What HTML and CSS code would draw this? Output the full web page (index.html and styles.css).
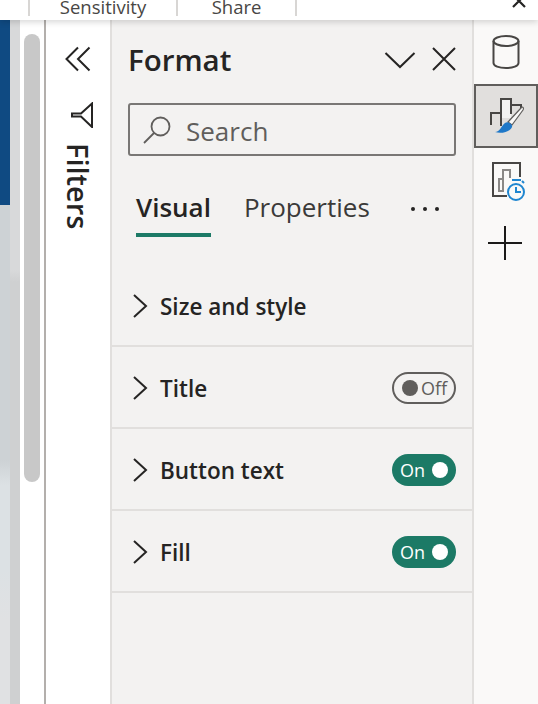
FILE: index.html
```html
<!DOCTYPE html>
<html lang="en">
<head>
    <meta charset="UTF-8">
    <title>Format</title>
    <link rel="stylesheet" href="styles.css">
</head>
<body>
    <div class="ribbon">
        <div class="ribbon-item sensitivity">Sensitivity</div>
        <div class="ribbon-item share">Share</div>
        <svg class="ribbon-close" width="18" height="8" viewBox="0 0 18 8"><path d="M3-5 15 7M15-5 3 7" stroke="#252423" stroke-width="2.2" fill="none"/></svg>
    </div>
    <div class="main">
        <div class="canvas-edge"></div>
        <div class="scroll-area"><div class="scroll-thumb"></div></div>
        <div class="filters">
            <svg class="filters-arrows" width="26" height="26" viewBox="0 0 26 26"><path d="M13 1.500 1.500 13 13 24.500M24.500 1.500 13 13 24.500 24.500" stroke="#252423" stroke-width="2" fill="none"/></svg>
            <svg class="filters-funnel" width="24" height="26" viewBox="0 0 24 26"><path d="M22 1.500V25L11 14.500H2V11.500H11Z" stroke="#252423" stroke-width="2" fill="none"/></svg>
            <div class="filters-label">Filters</div>
        </div>
        <div class="format">
            <div class="format-head">
                <h1 class="format-title">Format</h1>
                <svg class="format-chevron" width="32" height="20" viewBox="0 0 32 20"><path d="M1.500 3 16 17 30.500 3" stroke="#252423" stroke-width="2" fill="none"/></svg>
                <svg class="format-close" width="26" height="26" viewBox="0 0 26 26"><path d="M2 2 24 24M24 2 2 24" stroke="#252423" stroke-width="2" fill="none"/></svg>
            </div>
            <div class="search">
                <svg width="30" height="30" viewBox="0 0 30 30"><circle cx="18.500" cy="11.500" r="9" stroke="#605e5c" stroke-width="1.800" fill="none"/><path d="M12 18 2 28" stroke="#605e5c" stroke-width="1.800" fill="none"/></svg>
                <span>Search</span>
            </div>
            <div class="tabs">
                <div class="tab active">Visual</div>
                <div class="tab">Properties</div>
                <div class="tab-more"><i></i><i></i><i></i></div>
            </div>
            <div class="row first">
                <svg class="row-arrow" width="16" height="26" viewBox="0 0 16 26"><path d="M2 2 14 13 2 24" stroke="#252423" stroke-width="2" fill="none"/></svg>
                <span class="row-label">Size and style</span>
            </div>
            <div class="row">
                <svg class="row-arrow" width="16" height="26" viewBox="0 0 16 26"><path d="M2 2 14 13 2 24" stroke="#252423" stroke-width="2" fill="none"/></svg>
                <span class="row-label">Title</span>
                <div class="toggle off"><b></b><span>Off</span></div>
            </div>
            <div class="row">
                <svg class="row-arrow" width="16" height="26" viewBox="0 0 16 26"><path d="M2 2 14 13 2 24" stroke="#252423" stroke-width="2" fill="none"/></svg>
                <span class="row-label">Button text</span>
                <div class="toggle on"><span>On</span><b></b></div>
            </div>
            <div class="row">
                <svg class="row-arrow" width="16" height="26" viewBox="0 0 16 26"><path d="M2 2 14 13 2 24" stroke="#252423" stroke-width="2" fill="none"/></svg>
                <span class="row-label">Fill</span>
                <div class="toggle on"><span>On</span><b></b></div>
            </div>
        </div>
        <div class="rail">
            <div class="rail-btn data">
                <svg width="28" height="36" viewBox="0 0 28 36"><ellipse cx="14" cy="7" rx="12.500" ry="5" stroke="#484644" stroke-width="2" fill="none"/><path d="M1.500 7V29C1.500 32 7 34 14 34S26.500 32 26.500 29V7" stroke="#484644" stroke-width="2" fill="none"/></svg>
            </div>
            <div class="rail-btn selected">
                <svg width="36" height="36" viewBox="0 0 36 36">
                    <path d="M13 1H23V20H13Z" fill="#f3f2f1"/>
                    <path d="M3 27V15H13M13 28V1H23V16M23 7H33V11" stroke="#484644" stroke-width="2" fill="none"/>
                    <path d="M20 24 33 10C35 8 36 10 35 12L24 27Z" stroke="#605e5c" stroke-width="1.200" fill="#faf9f8"/>
                    <path d="M7 34C12 34 13 28 17 25C20 23 25 26 24 29C22 34 13 36 7 34Z" fill="#1f78c8"/>
                </svg>
            </div>
            <div class="rail-btn time">
                <svg width="36" height="38" viewBox="0 0 36 38">
                    <path d="M19 35H5V2H32V16" stroke="#484644" stroke-width="2" fill="none"/>
                    <path d="M11 18H15V30H11ZM15 18V9H22V17" stroke="#8a8886" stroke-width="2" fill="none"/>
                    <circle cx="28" cy="31" r="8" stroke="#1f86d0" stroke-width="2" fill="#faf9f8"/>
                    <path d="M28 26V31H33M24 19H33M34 20 36 22" stroke="#1f86d0" stroke-width="2" fill="none"/>
                </svg>
            </div>
            <div class="rail-btn add">
                <svg class="add-icon" width="34" height="34" viewBox="0 0 34 34"><path d="M17 0V34M0 17H34" stroke="#1b1a19" stroke-width="2" fill="none"/></svg>
            </div>
        </div>
    </div>
</body>
</html>
```

FILE: styles.css
```css
html, body {
    margin: 0;
    height: 100%;
}
body {
    display: flex;
    flex-direction: column;
    width: 538px;
    height: 704px;
    overflow: hidden;
    font-family: "Open Sans", "Noto Sans", sans-serif;
    color: #252423;
    background: #fff;
}
.ribbon {
    display: flex;
    align-items: flex-end;
    height: 20px;
    flex: none;
    background: #fff;
    box-shadow: 0 2px 6px rgba(0, 0, 0, .16);
    padding-left: 28px;
    overflow: hidden;
    position: relative;
    z-index: 1;
}
.ribbon-item {
    height: 16px;
    line-height: 14px;
    margin-bottom: 4px;
    border-left: 2px solid #d8d6d4;
    font-size: 18.500px;
    text-align: center;
    color: #484644;
}
.sensitivity {
    width: 146px;
}
.share {
    width: 117px;
    border-right: 2px solid #d8d6d4;
}
.ribbon-close {
    margin-left: auto;
    margin-right: 10px;
    align-self: flex-start;
}
.main {
    display: flex;
    flex: 1;
    min-height: 0;
}
.canvas-edge {
    width: 20px;
    flex: none;
    background:
        linear-gradient(#0f4a82, #0f4a82) 0 0 / 10px 185px no-repeat,
        linear-gradient(#cdd2d5 0 440px, #dce1e4 465px 550px, #e0e1e3 600px) 0 0 / 10px 100% no-repeat,
        linear-gradient(#d8d9da 0 250px, #cfd0d1 262px);
}
.scroll-area {
    width: 24px;
    flex: none;
    padding: 14px 4px 0;
    box-sizing: border-box;
    background: #fff;
}
.scroll-thumb {
    width: 16px;
    height: 448px;
    border-radius: 8px;
    background: #c8c8c8;
}
.filters {
    width: 66px;
    flex: none;
    box-sizing: border-box;
    border-left: 2px solid #b3afac;
    display: flex;
    flex-direction: column;
    align-items: center;
    padding-top: 26px;
}
.filters-funnel {
    margin-top: 30px;
    margin-left: 8px;
}
.filters-label {
    writing-mode: vertical-rl;
    margin-top: 15px;
    font-size: 29px;
    font-weight: 600;
    line-height: 30px;
    color: #252423;
}
.format {
    width: 364px;
    flex: none;
    box-sizing: border-box;
    background: #f3f2f1;
    border-left: 2px solid #e1dfdd;
    border-right: 2px solid #e1dfdd;
}
.format-head {
    display: flex;
    align-items: center;
    height: 40px;
    margin-top: 20px;
    padding: 0 15px 0 16px;
}
.format-title {
    margin: 0 auto 0 0;
    font-size: 29.500px;
    font-weight: 600;
    line-height: 40px;
}
.format-chevron {
    margin-right: -1px;
}
.format-close {
    margin-left: 16px;
    margin-bottom: 3px;
}
.search {
    display: flex;
    align-items: center;
    gap: 14px;
    height: 53px;
    box-sizing: border-box;
    margin: 23px 16px 0 16px;
    padding: 2px 0 0 12px;
    border: 2px solid #797775;
    border-radius: 3px;
    font-size: 26px;
    color: #605e5c;
}
.search svg {
    margin-top: -2px;
}
.tabs {
    display: flex;
    align-items: flex-start;
    height: 56px;
    margin: 24px 0 0 24px;
    box-sizing: border-box;
    padding-top: 8px;
    font-size: 26px;
    line-height: 39px;
}
.tab {
    height: 49px;
    margin-right: 33px;
    box-sizing: border-box;
    color: #3b3a39;
}
.tab.active {
    font-weight: 600;
    color: #252423;
    border-bottom: 4px solid #1c7a66;
}
.tab-more {
    display: flex;
    gap: 8px;
    margin: 19px 0 0 8px;
}
.tab-more i {
    width: 4px;
    height: 4px;
    border-radius: 50%;
    background: #252423;
}
.row {
    display: flex;
    align-items: center;
    height: 82px;
    box-sizing: border-box;
    padding: 2px 16px 0 20px;
    border-bottom: 2px solid #e1dfdd;
}
.row.first {
    margin-top: 29px;
}
.row-arrow {
    margin-right: 12px;
}
.row-label {
    font-size: 22.500px;
    font-weight: 600;
    color: #252423;
}
.toggle {
    display: flex;
    align-items: center;
    width: 64px;
    height: 32px;
    box-sizing: border-box;
    margin-left: auto;
    border-radius: 16px;
    font-size: 18px;
}
.toggle b {
    width: 16px;
    height: 16px;
    border-radius: 50%;
}
.toggle.off {
    padding-left: 8px;
    gap: 3px;
    border: 2px solid #605e5c;
    color: #605e5c;
}
.toggle.off b {
    background: #605e5c;
}
.toggle.on {
    justify-content: space-between;
    padding: 0 8px;
    background: #1c7a66;
    color: #fff;
}
.toggle.on b {
    background: #fff;
}
.rail {
    flex: 1;
    display: flex;
    flex-direction: column;
    background: #faf9f8;
}
.rail svg {
    overflow: visible;
}
.rail-btn {
    display: flex;
    align-items: center;
    justify-content: center;
}
.rail-btn.data {
    height: 64px;
}
.rail-btn.selected {
    height: 64px;
    box-sizing: border-box;
    background: #e1dfdd;
    border: 2px solid #605e5c;
}
.rail-btn.time {
    height: 62px;
    margin-top: 1px;
}
.rail-btn.add {
    height: 64px;
}
.add-icon {
    margin-right: 2px;
}
```
